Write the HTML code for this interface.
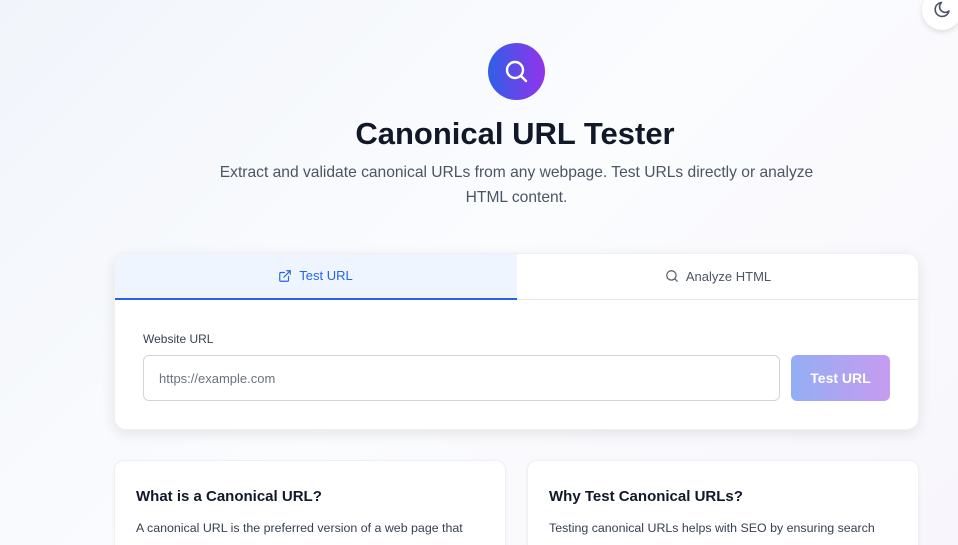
<!DOCTYPE html>
<html><head><style>
*{box-sizing:border-box;margin:0;padding:0}
html,body{width:958px;height:545px;overflow:hidden}
body{font-family:"Liberation Sans",sans-serif;background:linear-gradient(135deg,#f1f5fb 0%,#fbfcfe 50%,#f8f6fc 100%);position:relative;color:#111827}
.moon{position:absolute;left:922px;top:-10px;width:40px;height:40px;border-radius:50%;background:#fff;box-shadow:0 2px 6px rgba(0,0,0,.12)}
.logo{position:absolute;left:488px;top:43px;width:57px;height:57px;border-radius:50%;background:linear-gradient(90deg,#2f5fe8,#9333ea)}
h1{position:absolute;top:116px;left:0;width:100%;text-align:center;font-size:31px;font-weight:bold;color:#111827;padding-left:72px}
.sub{position:absolute;top:160px;left:200px;width:633px;text-align:center;font-size:15.6px;line-height:25px;color:#4b5563}
.card{position:absolute;left:114px;top:253px;width:805px;height:177px;background:#fff;border-radius:12px;box-shadow:0 4px 14px rgba(0,0,0,.09);border:1px solid #eef0f3;overflow:hidden}
.tab{position:absolute;top:-1px;height:47px;font-size:13px;display:flex;align-items:center;justify-content:center;gap:7px}
.t1{left:-1px;width:403px;background:#eff5ff;color:#2563eb;border-bottom:2px solid #2563eb}
.t2{left:402px;width:402px;color:#4b5563;border-bottom:1px solid #e5e7eb}
.lbl{position:absolute;left:28px;top:78px;font-size:12px;color:#374151}
.inp{position:absolute;left:28px;top:101px;width:637px;height:46px;border:1px solid #d1d5db;border-radius:6px;font-size:13px;color:#6b7280;padding:15px 15px}
.btn{position:absolute;left:676px;top:101px;width:99px;height:46px;border-radius:6px;background:linear-gradient(90deg,#93aef4,#c79bf0);color:#fff;font-size:14px;font-weight:bold;display:flex;align-items:center;justify-content:center}
.c2{position:absolute;top:460px;width:392px;height:100px;background:#fff;border-radius:10px;border:1px solid #eef0f3;box-shadow:0 1px 4px rgba(0,0,0,.04)}
.c2 h3{position:absolute;left:21px;top:27px;font-size:15px;font-weight:bold;color:#111827}
.c2 p{position:absolute;left:21px;top:60px;font-size:12.4px;color:#374151;white-space:nowrap}
</style></head><body>
<div class="moon"><svg width="40" height="40" viewBox="0 0 40 40" style="position:absolute;left:0;top:0"><path d="M27 21a7 7 0 1 1-7.5-8.5 5.5 5.5 0 0 0 7.5 8.5z" fill="none" stroke="#4b5563" stroke-width="1.6" stroke-linejoin="round"/></svg></div>
<div class="logo"><svg width="57" height="57" viewBox="0 0 57 57"><circle cx="27" cy="27" r="8" fill="none" stroke="#fff" stroke-width="2.4"/><line x1="33" y1="33" x2="38" y2="38" stroke="#fff" stroke-width="2.4" stroke-linecap="round"/></svg></div>
<h1>Canonical URL Tester</h1>
<div class="sub">Extract and validate canonical URLs from any webpage. Test URLs directly or analyze HTML content.</div>
<div class="card">
<div class="tab t1"><svg width="14" height="14" viewBox="0 0 24 24" fill="none" stroke="#2563eb" stroke-width="2" stroke-linecap="round"><path d="M18 13v6a2 2 0 0 1-2 2H5a2 2 0 0 1-2-2V8a2 2 0 0 1 2-2h6M15 3h6v6M10 14L21 3"/></svg>Test URL</div>
<div class="tab t2"><svg width="14" height="14" viewBox="0 0 24 24" fill="none" stroke="#4b5563" stroke-width="2" stroke-linecap="round"><circle cx="11" cy="11" r="8"/><path d="M21 21l-4.3-4.3"/></svg>Analyze HTML</div>
<div class="lbl">Website URL</div>
<div class="inp">https://example.com</div>
<div class="btn">Test URL</div>
</div>
<div class="c2" style="left:114px"><h3>What is a Canonical URL?</h3><p>A canonical URL is the preferred version of a web page that</p></div>
<div class="c2" style="left:527px"><h3>Why Test Canonical URLs?</h3><p>Testing canonical URLs helps with SEO by ensuring search</p></div>
</body></html>
